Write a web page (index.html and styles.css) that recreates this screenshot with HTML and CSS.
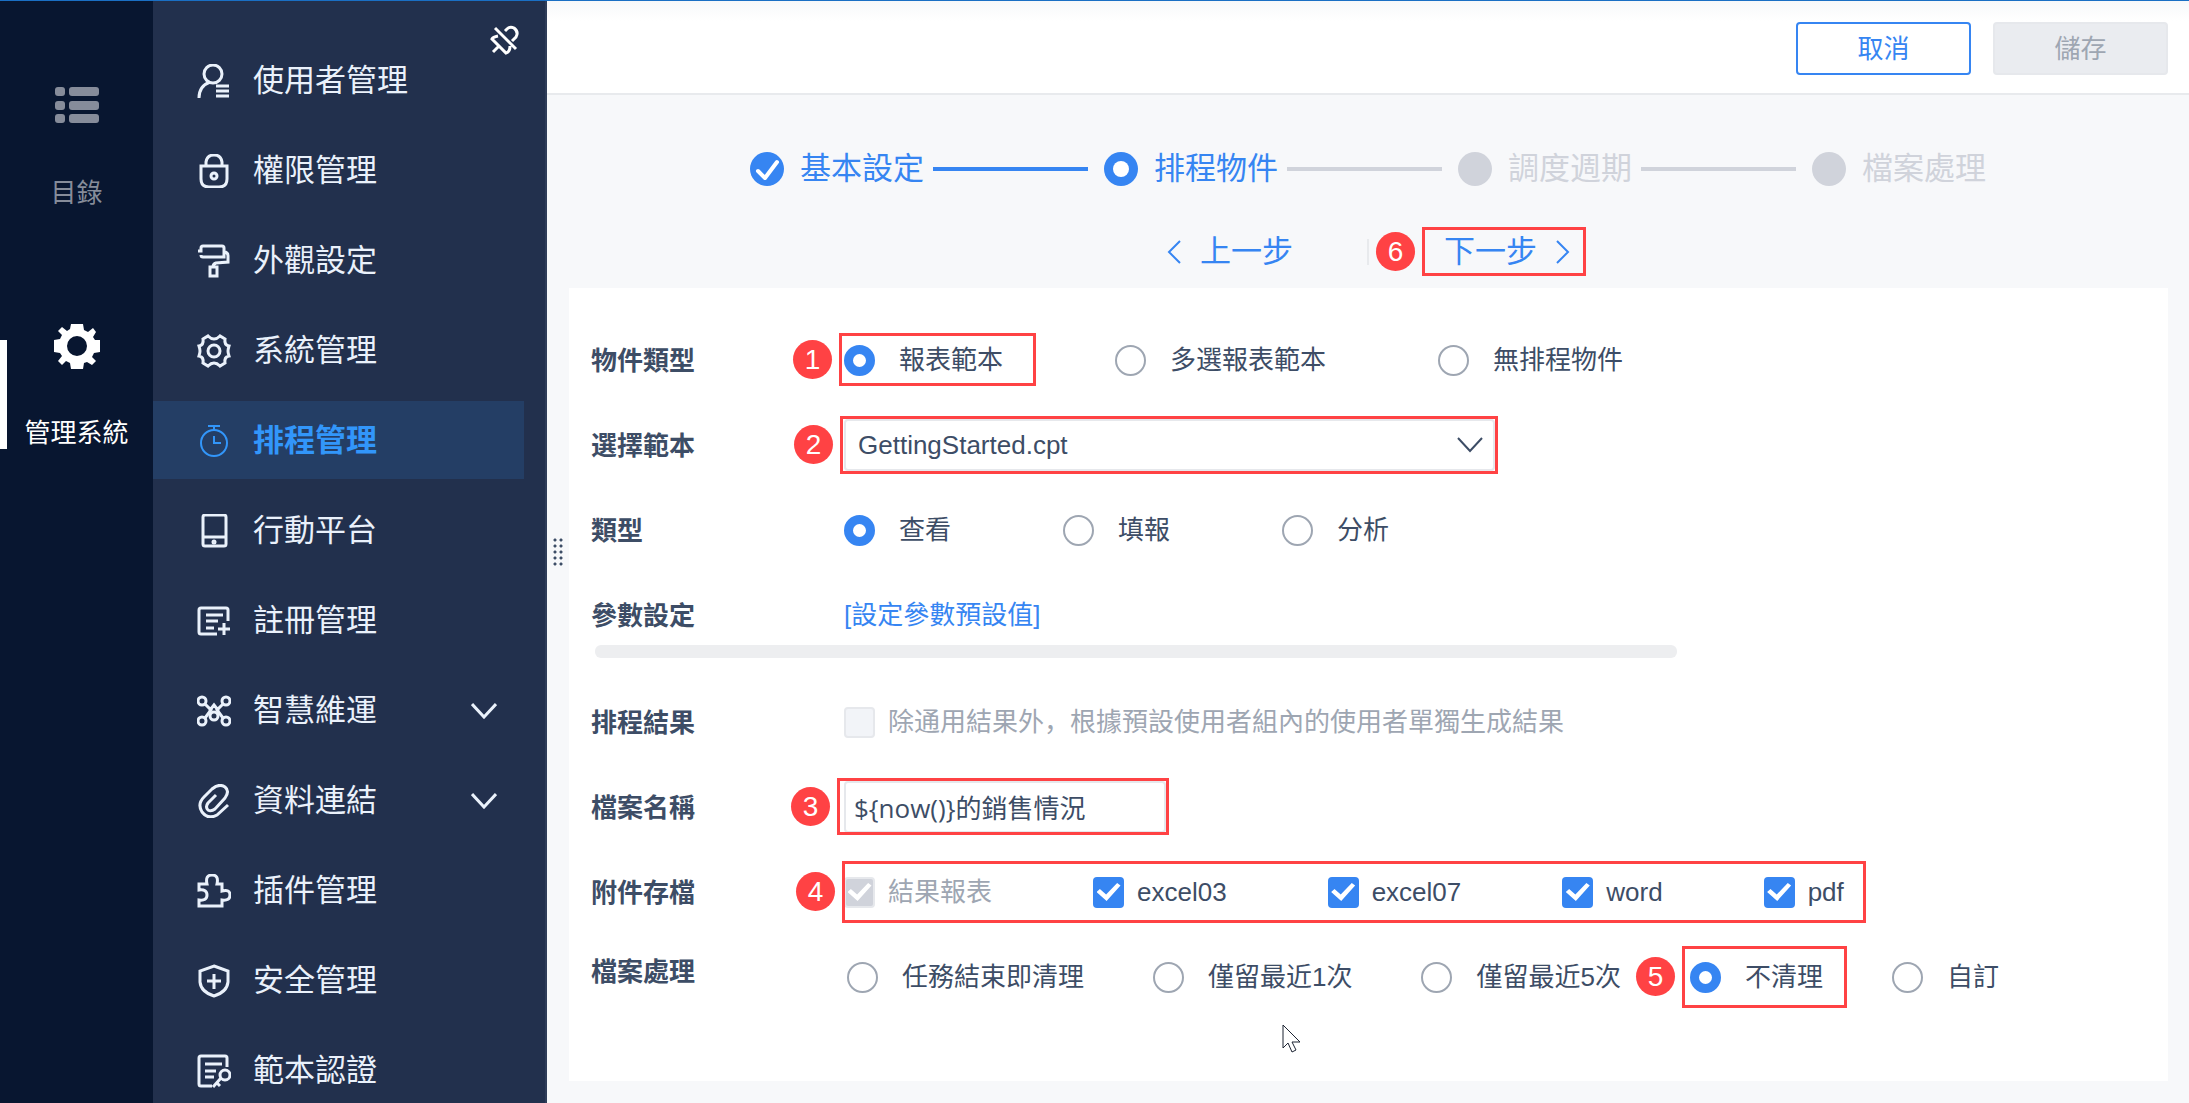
FILE: index.html
```html
<!DOCTYPE html>
<html lang="zh-CN">
<head>
    <meta charset="UTF-8">
    <meta name="viewport" content="width=device-width, initial-scale=1.0">
    <title>排程管理</title>
    <link rel="stylesheet" href="styles.css">
</head>
<body>

    <!-- LEFT RAIL -->
    <div class="rail">
        <a class="rail-item" href="#">
            <svg width="44" height="36" viewBox="0 0 44 36" fill="currentColor">
                <rect x="0" y="0" width="10" height="9" rx="3"/><rect x="14" y="0" width="30" height="9" rx="3"/>
                <rect x="0" y="14" width="10" height="9" rx="3"/><rect x="14" y="14" width="30" height="9" rx="3"/>
                <rect x="0" y="27" width="10" height="9" rx="3"/><rect x="14" y="27" width="30" height="9" rx="3"/>
            </svg>
            <span>目錄</span>
        </a>
        <a class="rail-item current" href="#">
            <svg width="46" height="46" viewBox="-23 -23 46 46" fill="currentColor">
                <path fill-rule="evenodd" d="M-6 -22H6L7 -16L11 -14L16 -18L19 -14L16 -9L18 -6H23V6L17 7L15 11L19 15L15 19L10 16L7 17L6 23H-6L-7 17L-11 15L-15 19L-19 15L-15 10L-17 7L-23 6V-6L-17 -7L-15 -11L-19 -15L-15 -19L-10 -15L-7 -17ZM0 -10A10 10 0 1 0 0 10A10 10 0 1 0 0 -10Z"/>
            </svg>
            <span>管理系統</span>
        </a>
    </div>

    <!-- SIDEBAR -->
    <div class="sidebar">
        <button class="pin" aria-label="取消固定">
            <svg width="30" height="30" viewBox="0 0 30 30">
                <path d="M5 3L26 24M15 6L17 4Q20 1 24 3Q29 7 26 12L22 16M8 11Q3 12 2 14L16 28Q20 27 20 21M9 21L3 27"/>
            </svg>
        </button>
        <nav class="menu">
            <a href="#">
                <svg class="icon" viewBox="0 0 34 34"><circle cx="16" cy="10" r="9"/><path d="M2 34Q2 22 13 18M19 22H32M19 27H32M19 32H32"/></svg>
                使用者管理
            </a>
            <a href="#">
                <svg class="icon" viewBox="0 0 34 34"><path d="M4 12H30V25Q30 33 22 33H12Q4 33 4 25ZM9 12V8Q10 1 17 1T25 8V12"/><circle cx="17" cy="22" r="3"/></svg>
                權限管理
            </a>
            <a href="#">
                <svg class="icon" viewBox="0 0 34 34"><path d="M1 7H4V4Q4 2 6 2H25Q27 2 27 4V13H6Q4 13 4 11M27 8Q31 8 31 12V18L19 19Q16 20 16 23M13 23H20V32H13Z"/></svg>
                外觀設定
            </a>
            <a href="#">
                <svg class="icon" viewBox="0 0 34 34"><path d="M11 2Q14 5 17 5T23 2L28 5Q27 11 32 12Q31 15 31 17T32 22Q27 23 28 29L23 32Q20 29 17 29T11 32L6 29Q7 23 2 22Q3 19 3 17T2 12Q7 11 6 5Z"/><circle cx="17" cy="17" r="6"/></svg>
                系統管理
            </a>
            <a class="active" href="#">
                <svg class="icon" viewBox="0 0 34 34"><circle cx="17" cy="19" r="13"/><path d="M11 2H23M17 2V6M17 12V19H24"/></svg>
                排程管理
            </a>
            <a href="#">
                <svg class="icon" viewBox="0 0 34 34"><rect x="6" y="1" width="23" height="31" rx="2"/><path d="M6 23H29"/><circle class="fill" cx="17" cy="28" r="1"/></svg>
                行動平台
            </a>
            <a href="#">
                <svg class="icon" viewBox="0 0 34 34"><path d="M20 30H4Q2 30 2 28V6Q2 4 4 4H29Q31 4 31 6V17M9 11H26M9 17H21M9 24H17M27 19V31M21 25H33"/></svg>
                註冊管理
            </a>
            <a href="#">
                <svg class="icon" viewBox="0 0 34 34"><circle cx="5" cy="7" r="4"/><circle cx="29" cy="7" r="4"/><circle cx="5" cy="27" r="4"/><circle cx="29" cy="27" r="4"/><circle cx="17" cy="22" r="4"/><path d="M8 10L14 16L8 24M26 10L20 16L26 24M13 20V16L17 11L21 16V20"/></svg>
                智慧維運
                <svg class="chevron" viewBox="0 0 26 16"><path d="M1 1L13 14L25 1"/></svg>
            </a>
            <a href="#">
                <svg class="icon" viewBox="0 0 34 34"><path d="M19 11L11 19Q8 23 11 26Q14 28 18 25L28 14Q33 7 28 3Q22 -1 15 5L7 13Q0 20 5 28Q11 36 20 31L31 21"/></svg>
                資料連結
                <svg class="chevron" viewBox="0 0 26 16"><path d="M1 1L13 14L25 1"/></svg>
            </a>
            <a href="#">
                <svg class="icon" viewBox="0 0 34 34"><path d="M2 10H10Q8 1 15 1T20 10H25V17Q33 15 33 21T25 26V32H2V26Q10 27 10 21T2 16Z"/></svg>
                插件管理
            </a>
            <a href="#">
                <svg class="icon" viewBox="0 0 34 34"><path d="M17 2L31 7V18Q30 28 17 32Q4 28 3 18V7ZM17 10V25M10 17H24"/></svg>
                安全管理
            </a>
            <a href="#">
                <svg class="icon" viewBox="0 0 34 34"><path d="M15 32H4Q2 32 2 30V4Q2 2 4 2H28Q30 2 30 4V13M8 10H25M8 17H19M8 23H17M24 24L16 33M20 29L23 32"/><circle cx="28" cy="21" r="5"/></svg>
                範本認證
            </a>
        </nav>
    </div>

    <!-- MAIN AREA -->
    <div class="main">
        <div class="splitter"></div>

        <header class="toolbar">
            <button class="btn btn-cancel">取消</button>
            <button class="btn btn-save" disabled>儲存</button>
        </header>

        <ol class="steps">
            <li class="done">
                <svg class="dot" viewBox="0 0 35 35"><circle cx="17" cy="17" r="17"/><path d="M8 19L15 26L27 10"/></svg>
                基本設定
            </li>
            <li class="doing">
                <svg class="dot" viewBox="0 0 35 35"><circle cx="17" cy="17" r="17"/><circle class="hole" cx="17" cy="17" r="8"/></svg>
                排程物件
            </li>
            <li>
                <svg class="dot" viewBox="0 0 35 35"><circle cx="17" cy="17" r="17"/></svg>
                調度週期
            </li>
            <li>
                <svg class="dot" viewBox="0 0 35 35"><circle cx="17" cy="17" r="17"/></svg>
                檔案處理
            </li>
        </ol>

        <div class="pager">
            <button class="prev">
                <svg width="14" height="24" viewBox="0 0 14 24"><path d="M13 1L2 12L13 23"/></svg>
                上一步
            </button>
            <span class="divider"></span>
            <button class="next">
                下一步
                <svg width="14" height="24" viewBox="0 0 14 24"><path d="M1 1L12 12L1 23"/></svg>
                <span class="mark mark-next"><b>6</b></span>
            </button>
        </div>

        <form class="panel">
            <div class="group">
                <div class="row">
                    <span class="label">物件類型</span>
                    <div class="options">
                        <label><input type="radio" name="object" checked>報表範本<span class="mark mark-object"><b>1</b></span></label>
                        <label><input type="radio" name="object">多選報表範本</label>
                        <label><input type="radio" name="object">無排程物件</label>
                    </div>
                </div>
                <div class="row">
                    <label class="label" for="template">選擇範本</label>
                    <div class="field field-select">
                        <select id="template"><option>GettingStarted.cpt</option></select>
                        <svg class="arrow" width="26" height="16" viewBox="0 0 26 16"><path d="M1 1L13 14L25 1"/></svg>
                        <span class="mark mark-select"><b>2</b></span>
                    </div>
                </div>
                <div class="row">
                    <span class="label">類型</span>
                    <div class="options">
                        <label><input type="radio" name="type" checked>查看</label>
                        <label><input type="radio" name="type">填報</label>
                        <label><input type="radio" name="type">分析</label>
                    </div>
                </div>
                <div class="row">
                    <span class="label">參數設定</span>
                    <a class="link" href="#">[設定參數預設值]</a>
                </div>
            </div>

            <div class="scrollbar"></div>

            <div class="group">
                <div class="row">
                    <span class="label">排程結果</span>
                    <div class="options checks">
                        <label class="off"><input type="checkbox" disabled>除通用結果外，根據預設使用者組內的使用者單獨生成結果</label>
                    </div>
                </div>
                <div class="row">
                    <label class="label" for="filename">檔案名稱</label>
                    <div class="field field-name">
                        <input type="text" id="filename" value="${now()}的銷售情況">
                        <span class="mark mark-name"><b>3</b></span>
                    </div>
                </div>
                <div class="row">
                    <span class="label">附件存檔</span>
                    <div class="options checks">
                        <label class="off"><input type="checkbox" checked disabled>結果報表</label>
                        <label><input type="checkbox" checked>excel03</label>
                        <label><input type="checkbox" checked>excel07</label>
                        <label><input type="checkbox" checked>word</label>
                        <label><input type="checkbox" checked>pdf</label>
                        <span class="mark mark-files"><b>4</b></span>
                    </div>
                </div>
                <div class="row row-top">
                    <span class="label">檔案處理</span>
                    <div class="options cleanup">
                        <label><input type="radio" name="clean">任務結束即清理</label>
                        <label><input type="radio" name="clean">僅留最近1次</label>
                        <label><input type="radio" name="clean">僅留最近5次</label>
                        <label><input type="radio" name="clean" checked>不清理<span class="mark mark-clean"><b>5</b></span></label>
                        <label><input type="radio" name="clean">自訂</label>
                    </div>
                </div>
            </div>
            <!-- mouse pointer -->
            <svg class="cursor" width="20" height="30" viewBox="0 0 20 30"><path d="M1 1V24L6 19L10 28L14 26L10 18H18Z"/></svg>
        </form>
    </div>

</body>
</html>
```
FILE: styles.css
```css
* { margin: 0; padding: 0; box-sizing: border-box; }
body {
    display: flex;
    height: 100vh;
    overflow: hidden;
    border-top: 1px solid #1a6fc4;
    background: #f7f8fa;
    color: #3d4d66;
    font-family: "Liberation Sans", "Noto Sans CJK SC", sans-serif;
    font-size: 26px;
    line-height: 40px;
}
button, input, select { font: inherit; color: inherit; }
button { background: none; border: none; cursor: pointer; }
a { color: inherit; text-decoration: none; }
svg { flex: none; fill: none; stroke: currentColor; stroke-width: 2; }

/* left rail */
.rail {
    flex: none;
    width: 153px;
    padding-top: 86px;
    background: #081630;
}
.rail-item {
    display: flex;
    flex-direction: column;
    align-items: center;
    gap: 50px;
    color: #868c9a;
}
.rail-item svg { fill: currentColor; stroke: none; }
.rail-item.current {
    position: relative;
    gap: 44px;
    margin-top: 110px;
    color: #fff;
}
.rail-item.current::before {
    content: "";
    position: absolute;
    left: 0;
    top: 17px;
    width: 7px;
    height: 109px;
    background: #fff;
}

/* sidebar */
.sidebar {
    position: relative;
    flex: none;
    width: 394px;
    overflow: hidden;
    background: #22304d;
    border-right: 2px solid #2f3d59;
}
.pin {
    position: absolute;
    top: 24px;
    right: 25px;
    height: 30px;
    line-height: 0;
    color: #fff;
}
.pin svg { stroke-width: 3; }
.menu {
    display: flex;
    flex-direction: column;
    gap: 12px;
    padding: 40px 21px 0 0;
    color: #eaf1fb;
    font-size: 31px;
}
.menu a {
    display: flex;
    align-items: center;
    gap: 22px;
    height: 78px;
    padding: 2px 27px 0 44px;
}
.menu a.active {
    background: #243e65;
    color: #3296fa;
    font-weight: bold;
}
.icon { width: 34px; height: 34px; stroke-width: 3; }
.active .icon { stroke-width: 2; }
.icon .fill { fill: currentColor; }
.chevron { width: 26px; height: 16px; margin-left: auto; stroke-width: 3; }

/* main area */
.main {
    position: relative;
    flex: 1;
    min-width: 0;
    display: flex;
    flex-direction: column;
}
.splitter {
    position: absolute;
    left: 5px;
    top: 536px;
    width: 12px;
    height: 30px;
    background: radial-gradient(circle, #3d4d66 1px, transparent 2px) 0 0 / 6px 6px;
}
.toolbar {
    display: flex;
    justify-content: flex-end;
    gap: 22px;
    padding: 21px 21px 18px;
    background: linear-gradient(#f7f8fa, #fff 20px);
    border-bottom: 2px solid #e8eaed;
}
.btn {
    width: 175px;
    height: 53px;
    border: 2px solid #3685f2;
    border-radius: 4px;
}
.btn-cancel { background: #fff; color: #3685f2; }
.btn-save { background: #eaecf0; border-color: #e6e8ec; color: #9ea6b2; }

/* steps */
.steps {
    display: flex;
    justify-content: center;
    padding-top: 54px;
    list-style: none;
    color: #d0d3db;
    font-size: 31px;
}
.steps li { display: flex; align-items: center; gap: 15px; white-space: nowrap; }
.steps li:not(:last-child)::after {
    content: "";
    width: 155px;
    height: 4px;
    margin: 0 16px 0 -6px;
    background: #d0d3db;
}
.steps .done, .steps .doing { color: #3685f2; }
.steps .done::after { background: #3685f2 !important; }
.dot { width: 35px; height: 35px; fill: currentColor; stroke: none; }
.dot path { fill: none; stroke: #fff; stroke-width: 4; stroke-linecap: round; stroke-linejoin: round; }
.dot .hole { fill: #fff; }

.pager {
    display: grid;
    grid-template-columns: 1fr 2px 1fr;
    align-items: center;
    padding: 38px 0 12px;
    color: #3685f2;
}
.pager button {
    position: relative;
    display: flex;
    align-items: center;
    gap: 19px;
    height: 49px;
    font-size: 31px;
}
.prev { justify-self: end; margin-right: 74px; }
.next { justify-self: start; margin-left: 75px; }
.divider { height: 26px; background: #e8eaed; }

/* form panel */
.panel {
    position: relative;
    flex: 1;
    margin: 0 21px 22px 22px;
    padding: 42px 22px 0;
    background: #fff;
}
.group { display: flex; flex-direction: column; gap: 25px; }
.row { display: flex; align-items: center; height: 60px; }
.label { flex: none; width: 253px; padding-top: 2px; font-weight: bold; line-height: 46px; }
.row-top .label { align-self: flex-start; }
.options {
    position: relative;
    display: flex;
    align-items: center;
    gap: 112px;
    height: 60px;
    white-space: nowrap;
}
.options label { position: relative; display: flex; align-items: center; gap: 24px; }
.options.checks { gap: 101px; }
.options.checks label { gap: 13px; }
.options.cleanup { gap: 69px; padding-left: 3px; }
.options .off { color: #9ea6b2; }
.link { color: #3685f2; }

input[type="radio"], input[type="checkbox"] {
    appearance: none;
    width: 31px;
    height: 31px;
    background: #fff;
}
input[type="radio"] { border: 2px solid #9ea6b2; border-radius: 50%; }
input[type="radio"]:checked { border: 9px solid #3685f2; }
input[type="checkbox"] {
    display: grid;
    place-items: center;
    border-radius: 4px;
}
input[type="checkbox"]:checked { background: #3685f2; }
input[type="checkbox"]:disabled { background: #f2f4f8; border: 2px solid #e6e8ec; }
input[type="checkbox"]:checked:disabled { background: #d0d3db; }
input[type="checkbox"]:checked::after {
    content: "";
    width: 24px;
    height: 18px;
    background: #fff;
    clip-path: polygon(0 50%, 14% 34%, 40% 64%, 86% 0, 100% 14%, 42% 100%);
}

.field { position: relative; height: 52px; }
.field-select { width: 651px; }
.field-name { width: 322px; }
.field select, .field input {
    appearance: none;
    width: 100%;
    height: 52px;
    padding: 0 12px;
    background: #fff;
    border: 2px solid #e6e8ec;
    border-radius: 4px;
    outline: none;
}
.field input { padding: 0 8px; font-family: "Open Sans", "Noto Sans CJK SC", sans-serif; }
.arrow { position: absolute; right: 12px; top: 18px; pointer-events: none; }

.scrollbar {
    width: 1082px;
    max-width: 100%;
    height: 13px;
    margin: 0 0 34px 4px;
    border-radius: 6px;
    background: #edeef0;
}

/* numbered red marks */
.mark {
    position: absolute;
    border: 3px solid #ff4244;
    pointer-events: none;
}
.mark b {
    position: absolute;
    left: -49px;
    top: 50%;
    width: 39px;
    height: 39px;
    margin-top: -20px;
    border-radius: 50%;
    background: #ff4244;
    color: #fff;
    font-size: 28px;
    font-weight: normal;
    line-height: 39px;
    text-align: center;
}
.mark-object { inset: -7px -33px -6px -5px; }
.mark-select { inset: -3px -3px -3px -4px; }
.mark-name { inset: -3px -3px -2px -7px; }
.mark-files { inset: -1px -22px -1px -2px; }
.mark-clean { inset: -11px -24px -11px -8px; }
.mark-next { inset: 0 -16px 0 -22px; }

.cursor {
    position: absolute;
    left: 713px;
    top: 736px;
    fill: #fff;
    stroke: #1d2433;
    stroke-width: 1;
}
```
